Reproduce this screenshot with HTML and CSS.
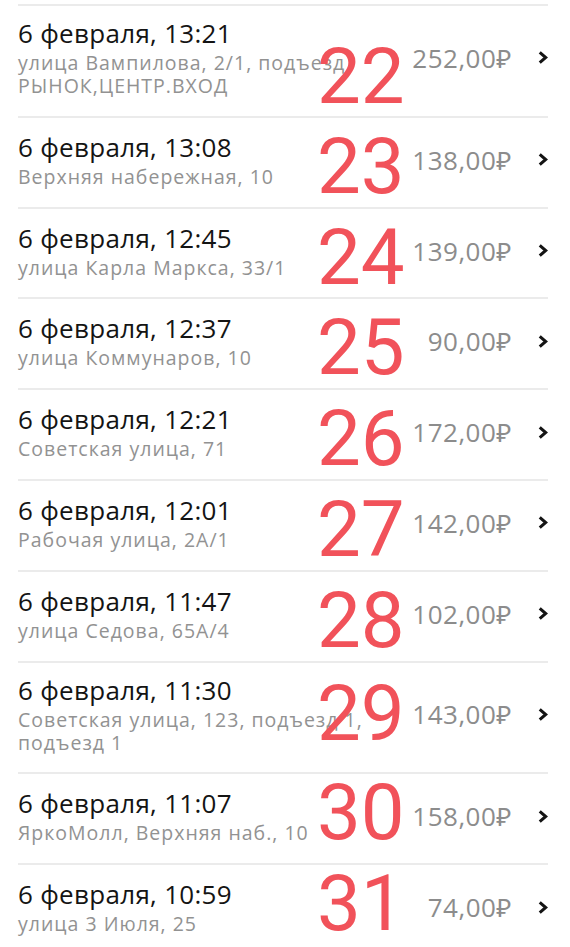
FILE: index.html
```html
<!DOCTYPE html>
<html lang="ru">
<head>
    <meta charset="UTF-8">
    <meta name="viewport" content="width=device-width, initial-scale=1.0">
    <title>Поездки</title>
    <link rel="stylesheet" href="styles.css">
</head>
<body>
    <ul class="trips">
        <li class="trip trip-wide">
            <div class="info">
                <div class="date">6 февраля, 13:21</div>
                <div class="address">улица Вампилова, 2/1, подъезд РЫНОК,ЦЕНТР.ВХОД</div>
            </div>
            <div class="price">252,00₽</div>
            <svg class="chevron" viewBox="0 0 9 12"><path d="M1.5 1.2 L7 6 L1.5 10.8"/></svg>
            <span class="mark mark-low">22</span>
        </li>
        <li class="trip">
            <div class="info">
                <div class="date">6 февраля, 13:08</div>
                <div class="address">Верхняя набережная, 10</div>
            </div>
            <div class="price">138,00₽</div>
            <svg class="chevron" viewBox="0 0 9 12"><path d="M1.5 1.2 L7 6 L1.5 10.8"/></svg>
            <span class="mark">23</span>
        </li>
        <li class="trip">
            <div class="info">
                <div class="date">6 февраля, 12:45</div>
                <div class="address">улица Карла Маркса, 33/1</div>
            </div>
            <div class="price">139,00₽</div>
            <svg class="chevron" viewBox="0 0 9 12"><path d="M1.5 1.2 L7 6 L1.5 10.8"/></svg>
            <span class="mark">24</span>
        </li>
        <li class="trip">
            <div class="info">
                <div class="date">6 февраля, 12:37</div>
                <div class="address">улица Коммунаров, 10</div>
            </div>
            <div class="price">90,00₽</div>
            <svg class="chevron" viewBox="0 0 9 12"><path d="M1.5 1.2 L7 6 L1.5 10.8"/></svg>
            <span class="mark">25</span>
        </li>
        <li class="trip">
            <div class="info">
                <div class="date">6 февраля, 12:21</div>
                <div class="address">Советская улица, 71</div>
            </div>
            <div class="price">172,00₽</div>
            <svg class="chevron" viewBox="0 0 9 12"><path d="M1.5 1.2 L7 6 L1.5 10.8"/></svg>
            <span class="mark">26</span>
        </li>
        <li class="trip">
            <div class="info">
                <div class="date">6 февраля, 12:01</div>
                <div class="address">Рабочая улица, 2А/1</div>
            </div>
            <div class="price">142,00₽</div>
            <svg class="chevron" viewBox="0 0 9 12"><path d="M1.5 1.2 L7 6 L1.5 10.8"/></svg>
            <span class="mark">27</span>
        </li>
        <li class="trip">
            <div class="info">
                <div class="date">6 февраля, 11:47</div>
                <div class="address">улица Седова, 65А/4</div>
            </div>
            <div class="price">102,00₽</div>
            <svg class="chevron" viewBox="0 0 9 12"><path d="M1.5 1.2 L7 6 L1.5 10.8"/></svg>
            <span class="mark">28</span>
        </li>
        <li class="trip trip-wide">
            <div class="info">
                <div class="date">6 февраля, 11:30</div>
                <div class="address">Советская улица, 123, подъезд 1, подъезд 1</div>
            </div>
            <div class="price">143,00₽</div>
            <svg class="chevron" viewBox="0 0 9 12"><path d="M1.5 1.2 L7 6 L1.5 10.8"/></svg>
            <span class="mark mark-mid">29</span>
        </li>
        <li class="trip">
            <div class="info">
                <div class="date">6 февраля, 11:07</div>
                <div class="address">ЯркоМолл, Верхняя наб., 10</div>
            </div>
            <div class="price">158,00₽</div>
            <svg class="chevron" viewBox="0 0 9 12"><path d="M1.5 1.2 L7 6 L1.5 10.8"/></svg>
            <span class="mark mark-high">30</span>
        </li>
        <li class="trip">
            <div class="info">
                <div class="date">6 февраля, 10:59</div>
                <div class="address">улица 3 Июля, 25</div>
            </div>
            <div class="price">74,00₽</div>
            <svg class="chevron" viewBox="0 0 9 12"><path d="M1.5 1.2 L7 6 L1.5 10.8"/></svg>
            <span class="mark mark-high">31</span>
        </li>
    </ul>
</body>
</html>
```

FILE: styles.css
```css
body {
    margin: 0;
    background-color: #ffffff;
    font-family: "Open Sans", "Noto Sans", sans-serif;
    color: #1a1a1a;
}

.trips {
    list-style: none;
    margin: 4px 22px 0 18px;
    padding: 0;
}

.trip {
    position: relative;
    display: flex;
    align-items: center;
    border-top: 2px solid #ebebeb;
    padding: 14px 0 18.8px;
}

/* строки с адресом в две строки чуть плотнее */
.trip-wide {
    padding-top: 12px;
}

.info {
    flex: 1;
    min-width: 0;
    padding-right: 20px;
}

.date {
    font-size: 26px;
    line-height: 30px;
    letter-spacing: 0.3px;
    color: #141414;
}

.address {
    margin-top: 3px;
    font-size: 19.5px;
    line-height: 23px;
    letter-spacing: 1px;
    color: #929292;
}

.price {
    min-width: 100px;
    text-align: right;
    font-size: 26px;
    letter-spacing: 0.5px;
    color: #8c8c8c;
    margin-right: 26px;
}

.chevron {
    width: 10px;
    height: 13px;
    fill: none;
    stroke: #141414;
    stroke-width: 2.8;
}

/* крупные красные номера поверх списка */
.mark {
    position: absolute;
    left: 299px;
    top: 10px;
    font-family: Roboto, sans-serif;
    font-size: 78px;
    line-height: 78px;
    color: #f1525a;
}

.mark-low {
    top: 32px;
}

.mark-mid {
    top: 12px;
}

.mark-high {
    top: 0;
}
```
